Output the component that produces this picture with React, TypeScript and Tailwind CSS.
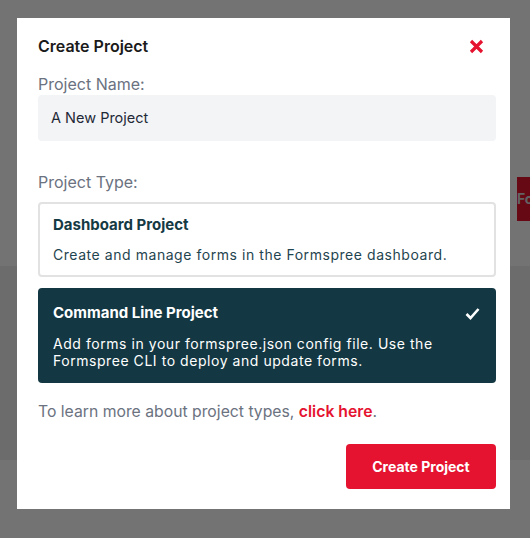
import React from "react";

export default function App() {
  return (
    <div
      className="relative w-full h-[538px] overflow-hidden bg-white"
      style={{ fontFamily: "Inter, 'Noto Sans', sans-serif" }}
    >
      {/* background page */}
      <div className="flex flex-col h-full">
        <div className="h-[177px]" />
        <div className="flex justify-end h-[44px]">
          <div className="w-[13px] bg-[#e5132f] text-[#d9d9d9] font-bold text-[14px] leading-[44px] overflow-hidden whitespace-nowrap">
            Fo
          </div>
        </div>
        <div className="h-[45px]" />
        <div className="h-[194px] bg-[#f0f0f0]" />
      </div>

      {/* overlay */}
      <div className="absolute inset-0 bg-black/55 pl-[17px] pt-[18px]">
        <div className="w-[493px] h-[491px] bg-white pl-[21px] pr-[14px] pt-[20px] flex flex-col">
          <div className="flex items-center justify-between h-[16px]">
            <h2 className="text-[16px] font-semibold text-[#1a1a1a] leading-none">Create Project</h2>
            <svg width="15" height="15" viewBox="0 0 15 15" className="mr-[12px]">
              <path d="M2 2 L13 13 M13 2 L2 13" stroke="#e5132f" strokeWidth="3.2" strokeLinecap="butt" />
            </svg>
          </div>

          <label className="mt-[21px] text-[16px] text-[#6b7280] leading-[18px]">Project Name:</label>
          <div className="mt-[2px] h-[46px] rounded-[4px] bg-[#f3f4f6] flex items-center px-[13px] text-[14.5px] text-[#1f2937]">
            A New Project
          </div>

          <label className="mt-[32px] text-[16px] text-[#6b7280] leading-[18px]">Project Type:</label>

          <div className="mt-[11px] h-[75px] rounded-[4px] border-2 border-[#e2e2e2] px-[13px] pt-[12px]">
            <div className="text-[15px] font-bold text-[#153a44] leading-[18px]">Dashboard Project</div>
            <div className="mt-[12px] text-[14px] tracking-[0.55px] text-[#1f4550] leading-[17px]">
              Create and manage forms in the Formspree dashboard.
            </div>
          </div>

          <div className="mt-[11px] h-[95px] rounded-[4px] bg-[#133843] px-[15px] pt-[16px]">
            <div className="flex items-center justify-between">
              <div className="text-[15px] font-bold text-white leading-[18px]">Command Line Project</div>
              <svg width="15" height="13" viewBox="0 0 15 13" className="mr-[1px]">
                <path d="M1.5 7 L5.5 11 L13.5 2" fill="none" stroke="white" strokeWidth="2.6" />
              </svg>
            </div>
            <div className="mt-[13px] text-[14px] tracking-[0.55px] text-white leading-[17px]">
              Add forms in your formspree.json config file. Use the
              <br />
              Formspree CLI to deploy and update forms.
            </div>
          </div>

          <p className="mt-[20px] text-[15.75px] text-[#6b7280] leading-[18px]">
            To learn more about project types,{" "}
            <a className="font-semibold text-[#e5132f]">click here</a>.
          </p>

          <div className="mt-[23px] flex justify-end">
            <button className="w-[150px] h-[45px] rounded-[4px] bg-[#e5132f] text-white text-[14px] font-bold">
              Create Project
            </button>
          </div>
        </div>
      </div>
    </div>
  );
}
